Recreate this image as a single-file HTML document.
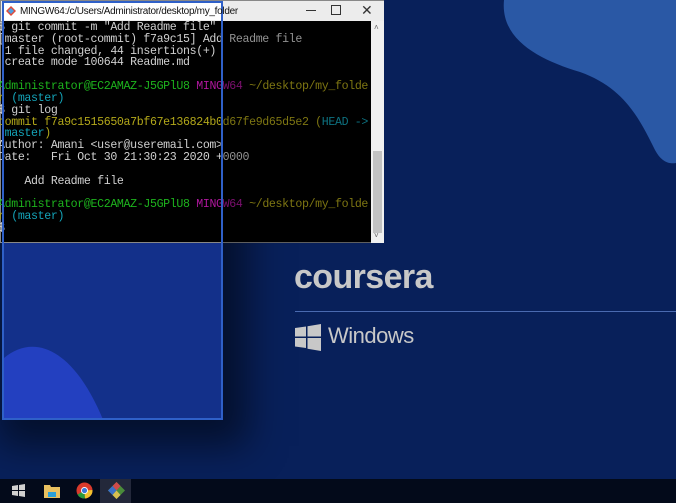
<!DOCTYPE html>
<html><head><style>
*{margin:0;padding:0;box-sizing:border-box}
body{width:676px;height:503px;overflow:hidden;background:#08205a;position:relative;font-family:"Liberation Sans",sans-serif}
.abs{position:absolute}
#term{left:0;top:0;width:384px;height:243px;background:#000;border:1px solid #888}
#term .tb{left:0;top:0;width:383px;height:20px;background:#ececec}
#term pre{position:absolute;left:-3px;top:21px;font-family:"Liberation Mono",monospace;font-size:11.6px;letter-spacing:-0.35px;line-height:11.82px;color:#d0d0d0;white-space:pre}
.g{color:#1db31d}.m{color:#b0179e}.y{color:#b3a81a}.c{color:#14a3b8}
#sb{left:370px;top:20px;width:13px;height:222px;background:#f0f0f0}
#front{left:2px;top:1px;width:221px;height:419px;border:2px solid #2f60c8;box-shadow:10px 12px 35px 14px rgba(0,0,0,.5)}
</style></head><body>
<svg class="abs" style="left:0;top:0" width="676" height="503"><path d="M504 0 C500 40 540 60 580 72 C625 88 640 120 655 150 C662 163 670 164 676 163 L676 0 Z" fill="#2a58a5"/></svg>
<div id="front" class="abs" style="background:#13308a;overflow:hidden">
<svg class="abs" style="left:0;top:0" width="221" height="419"><path d="M0 355 C30 330 70 345 100 419 L0 419 Z" fill="#2340c0"/></svg>
</div>
<div id="term" class="abs">
<div class="tb abs"></div>
<div class="abs" style="left:305px;top:9px;width:10px;height:1px;background:#333"></div>
<div class="abs" style="left:330px;top:4px;width:10px;height:10px;border:1px solid #333"></div>
<div class="abs" style="left:360px;top:1px;font-size:14px;color:#333">✕</div>
<div id="sb" class="abs"><div class="abs" style="left:2px;top:130px;width:9px;height:82px;background:#c2c2c2"></div><div class="abs" style="left:3px;top:2px;font-size:8px;color:#666">˄</div><div class="abs" style="left:3px;top:210px;font-size:8px;color:#666">˅</div></div>
<pre>$ git commit -m "Add Readme file"
[master (root-commit) f7a9c15] Add Readme file
 1 file changed, 44 insertions(+)
 create mode 100644 Readme.md

<span class="g">Administrator@EC2AMAZ-J5GPlU8</span> <span class="m">MINGW64</span> <span class="y">~/desktop/my_folde
r</span> <span class="c">(master)</span>
$ git log
<span class="y">commit f7a9c1515650a7bf67e136824b0d67fe9d65d5e2 (</span><span class="c">HEAD -&gt;
 master</span><span class="y">)</span>
Author: Amani &lt;user@useremail.com&gt;
Date:   Fri Oct 30 21:30:23 2020 +0000

    Add Readme file

<span class="g">Administrator@EC2AMAZ-J5GPlU8</span> <span class="m">MINGW64</span> <span class="y">~/desktop/my_folde
r</span> <span class="c">(master)</span>
$</pre>
<div class="abs" style="left:222px;top:20px;width:148px;height:222px;background:rgba(0,0,0,.3)"></div>
</div>
<div class="abs" style="left:2px;top:1px;width:221px;height:242px;border:2px solid #2f60c8;border-bottom:none"></div>
<div class="abs" style="left:4px;top:3px;width:217px;height:17px;background:#fff;font-size:10px;line-height:17px;padding-left:16px;color:#111;letter-spacing:-.3px">MINGW64:/c/Users/Administrator/desktop/my_folder</div>
<svg class="abs" style="left:6px;top:6px" width="10" height="10"><path d="M5 0L10 5L5 10L0 5Z" fill="#e04a3a"/><path d="M5 2L8 5L5 8L2 5Z" fill="#4fa0e0"/></svg>
<div class="abs" style="left:294px;top:258px;font-size:34px;font-weight:bold;color:#c8c8c8;letter-spacing:-.6px">coursera</div>
<div class="abs" style="left:295px;top:311px;width:381px;height:1px;background:#4a6ab0"></div>
<svg class="abs" style="left:295px;top:324px" width="26" height="27"><path d="M0 4L11 2.5V12.5H0Z M12.5 2.2L26 0V12.5H12.5Z M0 14H11V24L0 22.5Z M12.5 14H26V27L12.5 24.8Z" fill="#c8c8c8"/></svg>
<div class="abs" style="left:328px;top:323px;font-size:22px;color:#c8c8c8;letter-spacing:-.5px">Windows</div>
<div class="abs" style="left:0;top:479px;width:676px;height:24px;background:#030a1a"></div>
<div class="abs" style="left:100px;top:479px;width:31px;height:24px;background:#23283a"></div>
<svg class="abs" style="left:12px;top:484px" width="14" height="14"><path d="M0 2L6 1V6H0Z M7 1L13 0V6H7Z M0 7H6V12L0 11Z M7 7H13V13L7 12Z" fill="#d0d0d0"/></svg>
<svg class="abs" style="left:44px;top:483px" width="16" height="15"><path d="M0 2H6L7 4H16V15H0Z" fill="#e8c060"/><rect x="4" y="9" width="8" height="5" fill="#2a9fd8"/></svg>
<svg class="abs" style="left:76px;top:482px" width="17" height="17"><circle cx="8.5" cy="8.5" r="8" fill="#d93a2c"/><path d="M8.5 8.5L1.5 12.5A8 8 0 0 0 9 16.5Z" fill="#2a9a3c"/><path d="M8.5 8.5L16.5 8A8 8 0 0 1 9 16.5Z" fill="#f2c12e"/><circle cx="8.5" cy="8.5" r="3.5" fill="#fff"/><circle cx="8.5" cy="8.5" r="2.6" fill="#3a78d8"/></svg>
<svg class="abs" style="left:108px;top:482px" width="17" height="17"><path d="M8.5 0L17 8.5L8.5 17L0 8.5Z" fill="#4a8c3a"/><path d="M8.5 0L12.5 4L8.5 8.5L4.5 4Z" fill="#d04a4a"/><path d="M0 8.5L4.5 4L8.5 8.5L4.5 13Z" fill="#3a70c8"/><path d="M4.5 13L8.5 8.5L12.5 13L8.5 17Z" fill="#d8c050"/></svg>
</body></html>
